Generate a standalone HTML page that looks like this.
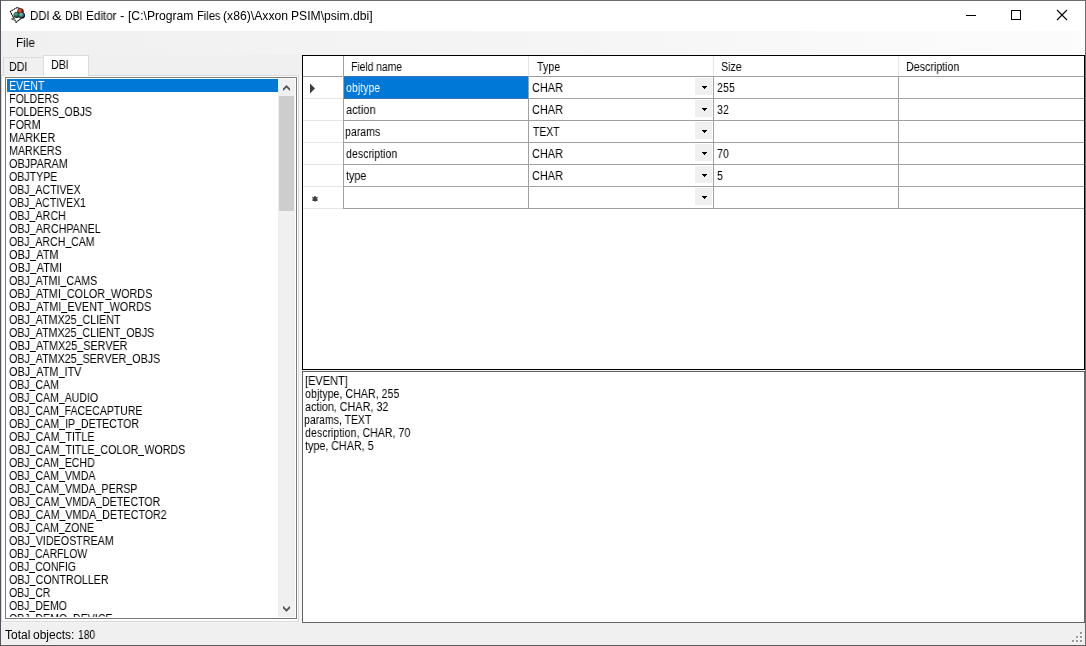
<!DOCTYPE html>
<html>
<head>
<meta charset="utf-8">
<title>DDI &amp; DBI Editor</title>
<style>
  html, body { margin: 0; padding: 0; }
  body {
    width: 1086px; height: 646px; overflow: hidden; position: relative;
    background: #f0f0f0;
    font-family: "Liberation Sans", sans-serif;
    font-size: 12px; color: #000;
  }
  .abs { position: absolute; }
  .t { position: absolute; white-space: pre; line-height: 15px; transform-origin: 0 0; color: #000; will-change: transform; }
  #win { position: absolute; left: 0; top: 0; width: 1086px; height: 646px; overflow: hidden; background: #f0f0f0; }

  /* window frame */
  #b-top { left: 0; top: 0; width: 1086px; height: 1px; background: #6b6b6b; }
  #b-left { left: 0; top: 0; width: 1px; height: 646px; background: #50545a; }
  #b-right { left: 1085px; top: 0; width: 1px; height: 646px; background: #6b6b6b; }
  #b-bottom { left: 0; top: 645px; width: 1086px; height: 1px; background: #5c5c5c; }

  #title { left: 1px; top: 1px; width: 1084px; height: 30px; background: #fff; }
  #menu { left: 1px; top: 31px; width: 1084px; height: 24px; background: linear-gradient(to right, #f0f0f0 0%, #f5f5f5 50%, #fcfcfc 100%); }

  /* tabs */
  #tab-ddi { left: 3px; top: 57px; width: 41px; height: 19px; border: 1px solid #dcdcdc; border-bottom: none; background: #f0f0f0; box-sizing: border-box; }
  #tab-dbi { left: 43px; top: 55px; width: 46px; height: 21px; border: 1px solid #dcdcdc; border-bottom: none; background: #fff; box-sizing: border-box; }
  #tabpage { left: 1px; top: 75px; width: 298px; height: 547px; border: 1px solid #d9d9d9; background: #fff; box-sizing: border-box; }

  #tabouter { left: 1px; top: 76px; width: 301px; height: 548px; background: #f6f6f6; border-bottom: 1px solid #e6e6e6; box-sizing: border-box; }
  /* listbox */
  #list { left: 5px; top: 77px; width: 292px; height: 542px; border: 1px solid #7a7a7a; background: #fff; box-sizing: border-box; overflow: hidden; }
  #list-items { left: 1px; top: 1px; width: 271px; height: 538px; overflow: hidden; }
  .li { position: absolute; left: 0; width: 271px; height: 13px; }
  .li.sel { background: #0078d7; }
  .li .t { font-size: 12.5px; line-height: 14px; left: 2.3px; top: 0; transform: scaleX(0.855); }
  .li u { text-decoration: none; color: transparent; background: linear-gradient(#000,#000) 0 12px / 100% 1px no-repeat; }
  .li.sel .t { color: #fff; }
  #sb { left: 272px; top: 1px; width: 17px; height: 538px; background: #f0f0f0; }
  #sb-thumb { left: 1px; top: 17px; width: 15px; height: 115px; background: #cdcdcd; }

  /* grid */
  #grid { left: 302px; top: 55px; width: 783px; height: 315px; border: 1px solid #000; background: #fff; box-sizing: border-box; overflow: hidden; }
  .hl { position: absolute; background: #a0a0a0; height: 1px; }
  .vl { position: absolute; background: #a0a0a0; width: 1px; }
  .lt { background: #e5e5e5; }
  .cb { position: absolute; width: 17px; height: 17px; background: #f0f0f0; }
  .cb i { position: absolute; background: #000; height: 1px; }

  /* memo */
  #memo { left: 302px; top: 371px; width: 783px; height: 252px; border: 1px solid #646464; background: #fff; box-sizing: border-box; overflow: hidden; }

  /* status */
  #status { left: 1px; top: 623px; width: 1084px; height: 22px; background: #f0f0f0; }
  .dot { position: absolute; width: 2px; height: 2px; background: #9a9a9a; box-shadow: 1px 1px 0 #fff; }
</style>
</head>
<body>
<div id="win">
<div class="abs" id="title"></div>
<svg class="abs" style="left:8px;top:5px" width="20" height="20" viewBox="8 5 20 20">
  <defs>
    <radialGradient id="gr" cx="0.42" cy="0.35" r="0.75"><stop offset="0" stop-color="#e8674a"/><stop offset="0.5" stop-color="#b8341e"/><stop offset="1" stop-color="#3a0a04"/></radialGradient>
    <radialGradient id="gg" cx="0.42" cy="0.35" r="0.75"><stop offset="0" stop-color="#5cb088"/><stop offset="0.5" stop-color="#2a7a52"/><stop offset="1" stop-color="#06261a"/></radialGradient>
    <radialGradient id="gb" cx="0.42" cy="0.35" r="0.75"><stop offset="0" stop-color="#8cc4d4"/><stop offset="0.5" stop-color="#3f8298"/><stop offset="1" stop-color="#0a2a36"/></radialGradient>
  </defs>
  <path d="M17.3 7.4 L10.3 11.5 L16.1 22.4 L24 16 L19.5 8.6 Z" fill="#fff" stroke="#000" stroke-width="1.1" stroke-linejoin="round" stroke-dasharray="2 0.45"/>
  <path d="M10.6 18.7 L13.9 17.9 L13.4 20.6 Z" fill="#444"/>
  <circle cx="20.5" cy="11.3" r="3.15" fill="#0a0a0a"/>
  <circle cx="21.8" cy="15.4" r="3.15" fill="#0a0a0a"/>
  <circle cx="16.6" cy="15.0" r="3.0" fill="#10201a"/>
  <circle cx="20.2" cy="11.0" r="2.6" fill="url(#gr)"/>
  <circle cx="16.4" cy="14.8" r="2.6" fill="url(#gg)"/>
  <circle cx="21.4" cy="15.1" r="2.6" fill="url(#gb)"/>
</svg>

<div class="t" style="left:30.05px;top:9px;font-size:12px;transform:scaleX(0.9541)">DDI</div>
<div class="t" style="left:52.46px;top:9px;font-size:12px;transform:scaleX(1.2179)">&amp;</div>
<div class="t" style="left:65.44px;top:9px;font-size:12px;transform:scaleX(0.8611)">DBI</div>
<div class="t" style="left:85.57px;top:9px;font-size:12px;transform:scaleX(0.9752)">Editor</div>
<div class="t" style="left:120.15px;top:9px;font-size:12px;transform:scaleX(1.1)">-</div>
<div class="t" style="left:128.04px;top:9px;font-size:12px;transform:scaleX(1.0119)">[C:\Program</div>
<div class="t" style="left:196.67px;top:9px;font-size:12px;transform:scaleX(0.9292)">Files</div>
<div class="t" style="left:223.44px;top:9px;font-size:12px;transform:scaleX(1.016)">(x86)\Axxon</div>
<div class="t" style="left:291.19px;top:9px;font-size:12px;transform:scaleX(1.0114)">PSIM\psim.dbi]</div>
<svg class="abs" style="left:960px;top:5px" width="120" height="22" viewBox="960 5 120 22" shape-rendering="crispEdges">
  <rect x="966" y="15" width="10" height="1" fill="#000"/>
  <rect x="1011.5" y="10.5" width="9" height="9" fill="none" stroke="#000" stroke-width="1"/>
  <path d="M1057 10 L1067 20 M1067 10 L1057 20" stroke="#000" stroke-width="1.1" fill="none" shape-rendering="geometricPrecision"/>
</svg>
<div class="abs" id="menu"></div>
<div class="t" style="left:15.83px;top:36px;font-size:12px;transform:scaleX(0.9746)">File</div>
<div class="abs" id="tabouter"></div>
<div class="abs" id="tabpage"></div>
<div class="abs" id="tab-ddi"></div>
<div class="abs" id="tab-dbi"></div>
<div class="t" style="left:8.84px;top:60px;font-size:12.5px;line-height:14px;transform:scaleX(0.855)">DDI</div>
<div class="t" style="left:50.85px;top:58px;font-size:12.5px;line-height:14px;transform:scaleX(0.855)">DBI</div>
<div class="abs" id="list"><div class="abs" id="list-items">
<div class="li sel" style="top:0px"><div class="t" style="left:2.25px;transform:scaleX(0.8519)">EVENT</div></div>
<div class="li" style="top:13px"><div class="t" style="left:2.25px;transform:scaleX(0.8487)">FOLDERS</div></div>
<div class="li" style="top:26px"><div class="t" style="left:2.26px;transform:scaleX(0.8412)">FOLDERS<u>_</u>OBJS</div></div>
<div class="li" style="top:39px"><div class="t" style="left:2.24px;transform:scaleX(0.8576)">FORM</div></div>
<div class="li" style="top:52px"><div class="t" style="left:2.23px;transform:scaleX(0.8657)">MARKER</div></div>
<div class="li" style="top:65px"><div class="t" style="left:2.25px;transform:scaleX(0.8531)">MARKERS</div></div>
<div class="li" style="top:78px"><div class="t" style="left:1.82px;transform:scaleX(0.8672)">OBJPARAM</div></div>
<div class="li" style="top:91px"><div class="t" style="left:1.83px;transform:scaleX(0.8491)">OBJTYPE</div></div>
<div class="li" style="top:104px"><div class="t" style="left:1.83px;transform:scaleX(0.8446)">OBJ<u>_</u>ACTIVEX</div></div>
<div class="li" style="top:117px"><div class="t" style="left:1.83px;transform:scaleX(0.8381)">OBJ<u>_</u>ACTIVEX1</div></div>
<div class="li" style="top:130px"><div class="t" style="left:1.82px;transform:scaleX(0.8513)">OBJ<u>_</u>ARCH</div></div>
<div class="li" style="top:143px"><div class="t" style="left:1.82px;transform:scaleX(0.8591)">OBJ<u>_</u>ARCHPANEL</div></div>
<div class="li" style="top:156px"><div class="t" style="left:1.83px;transform:scaleX(0.8435)">OBJ<u>_</u>ARCH<u>_</u>CAM</div></div>
<div class="li" style="top:169px"><div class="t" style="left:1.81px;transform:scaleX(0.8733)">OBJ<u>_</u>ATM</div></div>
<div class="li" style="top:182px"><div class="t" style="left:1.81px;transform:scaleX(0.8812)">OBJ<u>_</u>ATMI</div></div>
<div class="li" style="top:195px"><div class="t" style="left:1.82px;transform:scaleX(0.8543)">OBJ<u>_</u>ATMI<u>_</u>CAMS</div></div>
<div class="li" style="top:208px"><div class="t" style="left:1.82px;transform:scaleX(0.8607)">OBJ<u>_</u>ATMI<u>_</u>COLOR<u>_</u>WORDS</div></div>
<div class="li" style="top:221px"><div class="t" style="left:1.82px;transform:scaleX(0.8691)">OBJ<u>_</u>ATMI<u>_</u>EVENT<u>_</u>WORDS</div></div>
<div class="li" style="top:234px"><div class="t" style="left:1.82px;transform:scaleX(0.8552)">OBJ<u>_</u>ATMX25<u>_</u>CLIENT</div></div>
<div class="li" style="top:247px"><div class="t" style="left:1.82px;transform:scaleX(0.8541)">OBJ<u>_</u>ATMX25<u>_</u>CLIENT<u>_</u>OBJS</div></div>
<div class="li" style="top:260px"><div class="t" style="left:1.82px;transform:scaleX(0.8643)">OBJ<u>_</u>ATMX25<u>_</u>SERVER</div></div>
<div class="li" style="top:273px"><div class="t" style="left:1.82px;transform:scaleX(0.856)">OBJ<u>_</u>ATMX25<u>_</u>SERVER<u>_</u>OBJS</div></div>
<div class="li" style="top:286px"><div class="t" style="left:1.81px;transform:scaleX(0.8709)">OBJ<u>_</u>ATM<u>_</u>ITV</div></div>
<div class="li" style="top:299px"><div class="t" style="left:1.83px;transform:scaleX(0.8461)">OBJ<u>_</u>CAM</div></div>
<div class="li" style="top:312px"><div class="t" style="left:1.83px;transform:scaleX(0.8445)">OBJ<u>_</u>CAM<u>_</u>AUDIO</div></div>
<div class="li" style="top:325px"><div class="t" style="left:1.83px;transform:scaleX(0.8429)">OBJ<u>_</u>CAM<u>_</u>FACECAPTURE</div></div>
<div class="li" style="top:338px"><div class="t" style="left:1.83px;transform:scaleX(0.8489)">OBJ<u>_</u>CAM<u>_</u>IP<u>_</u>DETECTOR</div></div>
<div class="li" style="top:351px"><div class="t" style="left:1.82px;transform:scaleX(0.854)">OBJ<u>_</u>CAM<u>_</u>TITLE</div></div>
<div class="li" style="top:364px"><div class="t" style="left:1.82px;transform:scaleX(0.8543)">OBJ<u>_</u>CAM<u>_</u>TITLE<u>_</u>COLOR<u>_</u>WORDS</div></div>
<div class="li" style="top:377px"><div class="t" style="left:1.83px;transform:scaleX(0.8454)">OBJ<u>_</u>CAM<u>_</u>ECHD</div></div>
<div class="li" style="top:390px"><div class="t" style="left:1.83px;transform:scaleX(0.8468)">OBJ<u>_</u>CAM<u>_</u>VMDA</div></div>
<div class="li" style="top:403px"><div class="t" style="left:1.83px;transform:scaleX(0.8483)">OBJ<u>_</u>CAM<u>_</u>VMDA<u>_</u>PERSP</div></div>
<div class="li" style="top:416px"><div class="t" style="left:1.82px;transform:scaleX(0.8524)">OBJ<u>_</u>CAM<u>_</u>VMDA<u>_</u>DETECTOR</div></div>
<div class="li" style="top:429px"><div class="t" style="left:1.82px;transform:scaleX(0.8548)">OBJ<u>_</u>CAM<u>_</u>VMDA<u>_</u>DETECTOR2</div></div>
<div class="li" style="top:442px"><div class="t" style="left:1.83px;transform:scaleX(0.8436)">OBJ<u>_</u>CAM<u>_</u>ZONE</div></div>
<div class="li" style="top:455px"><div class="t" style="left:1.82px;transform:scaleX(0.8567)">OBJ<u>_</u>VIDEOSTREAM</div></div>
<div class="li" style="top:468px"><div class="t" style="left:1.83px;transform:scaleX(0.8338)">OBJ<u>_</u>CARFLOW</div></div>
<div class="li" style="top:481px"><div class="t" style="left:1.83px;transform:scaleX(0.8376)">OBJ<u>_</u>CONFIG</div></div>
<div class="li" style="top:494px"><div class="t" style="left:1.82px;transform:scaleX(0.8532)">OBJ<u>_</u>CONTROLLER</div></div>
<div class="li" style="top:507px"><div class="t" style="left:1.83px;transform:scaleX(0.8404)">OBJ<u>_</u>CR</div></div>
<div class="li" style="top:520px"><div class="t" style="left:1.83px;transform:scaleX(0.8421)">OBJ<u>_</u>DEMO</div></div>
<div class="li" style="top:533px"><div class="t" style="left:1.83px;transform:scaleX(0.8458)">OBJ<u>_</u>DEMO<u>_</u>DEVICE</div></div>
</div>
<div class="abs" id="sb">
  <div class="abs" id="sb-thumb"></div>
  <svg class="abs" style="left:0;top:0" width="17" height="17" viewBox="0 0 17 17"><path d="M8.5 5.9 L12 9.4 L12 11.9 L8.5 8.4 L5 11.9 L5 9.4 Z" fill="#505050"/></svg>
  <svg class="abs" style="left:0;top:521px" width="17" height="17" viewBox="0 0 17 17"><path d="M8.5 11.7 L12 8.2 L12 5.7 L8.5 9.2 L5 5.7 L5 8.2 Z" fill="#505050"/></svg>
</div>
</div>
<div class="abs" id="grid">
<div class="abs" style="left:41px;top:21px;width:184px;height:21px;background:#0078d7"></div>
<div class="hl" style="left:0;top:20px;width:781px"></div>
<div class="hl lt" style="left:0;top:42px;width:40px"></div>
<div class="hl" style="left:41px;top:42px;width:740px"></div>
<div class="hl lt" style="left:0;top:64px;width:40px"></div>
<div class="hl" style="left:41px;top:64px;width:740px"></div>
<div class="hl lt" style="left:0;top:86px;width:40px"></div>
<div class="hl" style="left:41px;top:86px;width:740px"></div>
<div class="hl lt" style="left:0;top:108px;width:40px"></div>
<div class="hl" style="left:41px;top:108px;width:740px"></div>
<div class="hl lt" style="left:0;top:130px;width:40px"></div>
<div class="hl" style="left:41px;top:130px;width:740px"></div>
<div class="hl lt" style="left:0;top:152px;width:40px"></div>
<div class="hl" style="left:41px;top:152px;width:740px"></div>
<div class="hl" style="left:41px;top:20px;width:184px;background:#3a76b8"></div>
<div class="hl" style="left:41px;top:42px;width:184px;background:#3a76b8"></div>
<div class="vl" style="left:40px;top:0;height:153px"></div>
<div class="vl lt" style="left:225px;top:0;height:20px"></div>
<div class="vl" style="left:225px;top:20px;height:133px"></div>
<div class="vl lt" style="left:410px;top:0;height:20px"></div>
<div class="vl" style="left:410px;top:20px;height:133px"></div>
<div class="vl lt" style="left:595px;top:0;height:20px"></div>
<div class="vl" style="left:595px;top:20px;height:133px"></div>
<div class="t" style="left:47.68px;top:4px;font-size:12.5px;line-height:14px;transform:scaleX(0.8249)">Field name</div>
<div class="t" style="left:234.09px;top:4px;font-size:12.5px;line-height:14px;transform:scaleX(0.855)">Type</div>
<div class="t" style="left:417.86px;top:4px;font-size:12.5px;line-height:14px;transform:scaleX(0.855)">Size</div>
<div class="t" style="left:602.65px;top:4px;font-size:12.5px;line-height:14px;transform:scaleX(0.8535)">Description</div>
<div class="t" style="left:43.48px;top:25px;font-size:12.5px;line-height:14px;color:#fff;transform:scaleX(0.8484)">objtype</div>
<div class="t" style="left:43.46px;top:47px;font-size:12.5px;line-height:14px;transform:scaleX(0.8875)">action</div>
<div class="t" style="left:42.37px;top:69px;font-size:12.5px;line-height:14px;transform:scaleX(0.8444)">params</div>
<div class="t" style="left:43.48px;top:91px;font-size:12.5px;line-height:14px;transform:scaleX(0.8473)">description</div>
<div class="t" style="left:43.19px;top:113px;font-size:12.5px;line-height:14px;transform:scaleX(0.855)">type</div>
<div class="t" style="left:229.26px;top:25px;font-size:12.5px;line-height:14px;transform:scaleX(0.873)">CHAR</div>
<div class="t" style="left:229.26px;top:47px;font-size:12.5px;line-height:14px;transform:scaleX(0.873)">CHAR</div>
<div class="t" style="left:230.39px;top:69px;font-size:12.5px;line-height:14px;transform:scaleX(0.8317)">TEXT</div>
<div class="t" style="left:229.26px;top:91px;font-size:12.5px;line-height:14px;transform:scaleX(0.873)">CHAR</div>
<div class="t" style="left:229.26px;top:113px;font-size:12.5px;line-height:14px;transform:scaleX(0.873)">CHAR</div>
<div class="t" style="left:413.87px;top:25px;font-size:12.5px;line-height:14px;transform:scaleX(0.855)">255</div>
<div class="t" style="left:413.87px;top:47px;font-size:12.5px;line-height:14px;transform:scaleX(0.855)">32</div>
<div class="t" style="left:413.97px;top:91px;font-size:12.5px;line-height:14px;transform:scaleX(0.855)">70</div>
<div class="t" style="left:413.97px;top:113px;font-size:12.5px;line-height:14px;transform:scaleX(0.855)">5</div>
<div class="cb" style="left:392px;top:22px"><i style="left:7px;top:8px;width:5px"></i><i style="left:8px;top:9px;width:3px"></i><i style="left:9px;top:10px;width:1px"></i></div>
<div class="cb" style="left:392px;top:44px"><i style="left:7px;top:8px;width:5px"></i><i style="left:8px;top:9px;width:3px"></i><i style="left:9px;top:10px;width:1px"></i></div>
<div class="cb" style="left:392px;top:66px"><i style="left:7px;top:8px;width:5px"></i><i style="left:8px;top:9px;width:3px"></i><i style="left:9px;top:10px;width:1px"></i></div>
<div class="cb" style="left:392px;top:88px"><i style="left:7px;top:8px;width:5px"></i><i style="left:8px;top:9px;width:3px"></i><i style="left:9px;top:10px;width:1px"></i></div>
<div class="cb" style="left:392px;top:110px"><i style="left:7px;top:8px;width:5px"></i><i style="left:8px;top:9px;width:3px"></i><i style="left:9px;top:10px;width:1px"></i></div>
<div class="cb" style="left:392px;top:132px"><i style="left:7px;top:8px;width:5px"></i><i style="left:8px;top:9px;width:3px"></i><i style="left:9px;top:10px;width:1px"></i></div>
<svg class="abs" style="left:0;top:21px" width="40" height="21" viewBox="303 77 40 21"><path d="M310 83.5 L310 93.5 L315 88.5 Z" fill="#3c3c3c"/></svg>
<svg class="abs" style="left:0;top:131px" width="40" height="21" viewBox="303 187 40 21"><path d="M315 196 L315 201.6 M312.4 197.3 L317.6 200.3 M317.6 197.3 L312.4 200.3" stroke="#3c3c3c" stroke-width="1.5" fill="none"/></svg>
</div>
<div class="abs" id="memo">
<div class="t" style="left:2.04px;top:2px;font-size:12.5px;line-height:14px;transform:scaleX(0.8787)">[EVENT]</div>
<div class="t" style="left:1.57px;top:15px;font-size:12.5px;line-height:14px;transform:scaleX(0.8548)">objtype, CHAR, 255</div>
<div class="t" style="left:1.57px;top:28px;font-size:12.5px;line-height:14px;transform:scaleX(0.8639)">action, CHAR, 32</div>
<div class="t" style="left:1.37px;top:41px;font-size:12.5px;line-height:14px;transform:scaleX(0.8379)">params, TEXT</div>
<div class="t" style="left:1.57px;top:54px;font-size:12.5px;line-height:14px;transform:scaleX(0.8513)">description, CHAR, 70</div>
<div class="t" style="left:1.79px;top:67px;font-size:12.5px;line-height:14px;transform:scaleX(0.8582)">type, CHAR, 5</div>
</div>
<div class="abs" id="status"></div>
<div class="t" style="left:5.35px;top:628px;font-size:12px;transform:scaleX(0.9856)">Total</div>
<div class="t" style="left:33.1px;top:628px;font-size:12px;transform:scaleX(0.9962)">objects:</div>
<div class="t" style="left:78.14px;top:628px;font-size:12px;transform:scaleX(0.8595)">180</div>
<div class="dot" style="left:1080px;top:632px"></div>
<div class="dot" style="left:1076px;top:636px"></div>
<div class="dot" style="left:1080px;top:636px"></div>
<div class="dot" style="left:1072px;top:640px"></div>
<div class="dot" style="left:1076px;top:640px"></div>
<div class="dot" style="left:1080px;top:640px"></div>
<div class="abs" id="b-top"></div><div class="abs" id="b-left"></div><div class="abs" id="b-right"></div><div class="abs" id="b-bottom"></div>
</div>
</body>
</html>
